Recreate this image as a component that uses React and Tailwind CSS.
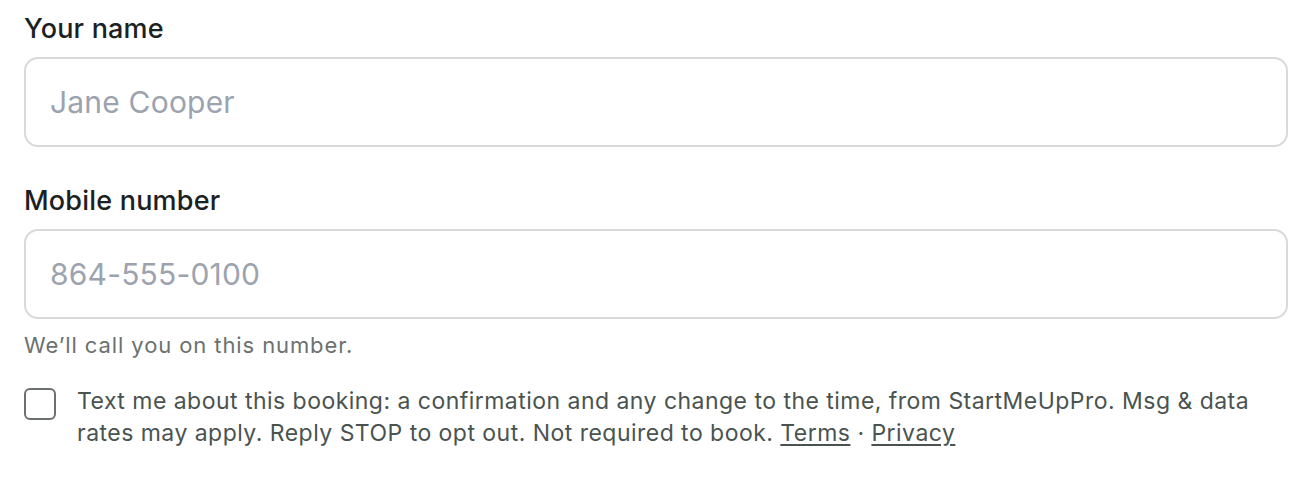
import React from "react";

export default function App() {
  return (
    <div className="bg-white w-[1312px] h-[488px] px-6 pt-3" style={{ fontFamily: "Inter, 'Noto Sans', sans-serif" }}>
      <label className="block text-[27px] leading-[34px] tracking-[0.2px] font-medium text-[#1b211f]">Your name</label>
      <input
        type="text"
        placeholder="Jane Cooper"
        className="mt-[11px] block w-full h-[90px] rounded-[14px] border-2 border-[#d9d9d9] px-[24px] text-[30px] tracking-[0.2px] text-[#1b211f] placeholder:text-[#9ca3af] outline-none"
      />
      <label className="mt-[37px] block text-[27px] leading-[34px] tracking-[0.2px] font-medium text-[#1b211f]">Mobile number</label>
      <input
        type="tel"
        placeholder="864-555-0100"
        className="mt-[11px] block w-full h-[90px] rounded-[14px] border-2 border-[#d9d9d9] px-[24px] text-[30px] tracking-[0.2px] text-[#1b211f] placeholder:text-[#9ca3af] outline-none"
      />
      <p className="mt-3 text-[22px] leading-[28px] tracking-[0.9px] text-[#6b7170]">We’ll call you on this number.</p>
      <div className="mt-[26px] flex items-start gap-[21px]">
        <span className="mt-[3px] shrink-0 w-[32px] h-[32px] rounded-[6px] border-2 border-[#6b6f6e] bg-white" />
        <p className="text-[23px] leading-[32px] tracking-[0.47px] text-[#4a5350]">
          Text me about this booking: a confirmation and any change to the time, from StartMeUpPro. Msg &amp; data rates may apply. Reply STOP to opt out. Not required to book.{" "}
          <a className="underline underline-offset-[3px]">Terms</a> · <a className="underline underline-offset-[3px]">Privacy</a>
        </p>
      </div>
    </div>
  );
}
